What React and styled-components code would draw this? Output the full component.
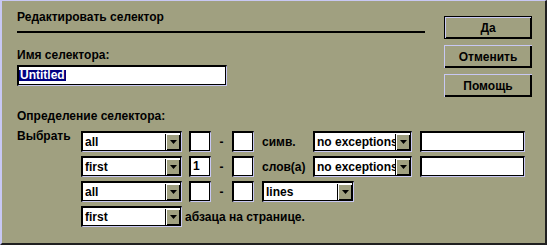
import React from "react";
import styled, { createGlobalStyle, css } from "styled-components";

const KHAKI = "#a0a080";
const LAV = "#c8c8f4";
const DARK = "#202020";

const Global = createGlobalStyle`
  html, body { margin: 0; padding: 0; background: ${KHAKI}; }
  body { font-family: "Liberation Sans", Arial, sans-serif; font-weight: bold; font-size: 12px; color: #000; }
  * { box-sizing: border-box; }
`;

const sunken = css`
  border-style: solid;
  border-width: 2px 1px 1px 2px;
  border-color: #000 ${LAV} ${LAV} #000;
  box-shadow: inset -1px -1px 0 #000;
  background: #fff;
`;

const Window = styled.div`
  width: 547px;
  height: 245px;
  background: ${KHAKI};
  border-style: solid;
  border-width: 1px 2px 2px 2px;
  border-color: ${LAV} ${DARK} ${DARK} ${LAV};
  display: flex;
  flex-direction: column;
`;

const TopRow = styled.div`
  display: flex;
  align-items: flex-start;
  padding-left: 15px;
`;

const MainCol = styled.div`
  width: 408px;
  margin-top: 9px;
  display: flex;
  flex-direction: column;
`;

const Title = styled.div`
  line-height: 14px;
  height: 14px;
  white-space: nowrap;
`;

const Rule = styled.div`
  height: 2px;
  background: #000;
  margin-top: 7px;
`;

const Label = styled.div`
  line-height: 14px;
  height: 14px;
  margin-top: ${(p) => p.$mt || 0}px;
  white-space: nowrap;
`;

const NameInput = styled.div`
  ${sunken};
  width: 210px;
  height: 21px;
  margin-top: 3px;
  padding: 1px 0 0 0;
`;

const Selected = styled.span`
  display: inline-block;
  background: #000080;
  color: #fff;
  line-height: 11px;
  height: 11px;
  padding: 0 1px 0 1px;
`;

const ButtonCol = styled.div`
  margin-left: 19px;
  margin-top: 15px;
  display: flex;
  flex-direction: column;
  gap: 6px;
`;

const Button = styled.div`
  width: 88px;
  height: 23px;
  background: ${KHAKI};
  display: flex;
  align-items: center;
  justify-content: center;
  box-shadow: inset 1px 1px 0 ${LAV}, inset -2px -2px 0 #000;
  ${(p) =>
    p.$default &&
    css`
      border: 1px solid #000;
      box-shadow: inset 1px 1px 0 ${LAV}, inset -1px -1px 0 #000;
    `}
`;

const DefSection = styled.div`
  padding-left: 15px;
  margin-top: 12px;
  display: flex;
  flex-direction: column;
`;

const DefBody = styled.div`
  display: flex;
  margin-top: 8px;
`;

const ChooseLabel = styled.div`
  width: 64px;
  line-height: 11px;
  white-space: nowrap;
`;

const Rows = styled.div`
  display: flex;
  flex-direction: column;
  gap: 4px;
`;

const Row = styled.div`
  display: flex;
  align-items: center;
  height: 21px;
`;

const Select = styled.div`
  ${sunken};
  width: ${(p) => p.$w}px;
  height: 21px;
  margin-left: ${(p) => p.$ml || 0}px;
  display: flex;
  align-items: stretch;
  padding: 0 1px 1px 0;
`;

const SelectText = styled.div`
  flex: 1;
  overflow: hidden;
  white-space: nowrap;
  line-height: 18px;
  padding-left: 2px;
`;

const ArrowBtn = styled.div`
  width: 15px;
  flex: none;
  margin-top: 1px;
  background: ${KHAKI};
  border-left: 1px solid #000;
  box-shadow: inset 1px 1px 0 #fff, inset -1px -1px 0 #000;
  display: flex;
  align-items: center;
  justify-content: center;
`;

const Box = styled.div`
  ${sunken};
  width: ${(p) => p.$w}px;
  height: 21px;
  margin-left: ${(p) => p.$ml || 0}px;
  line-height: 16px;
  padding-left: 2px;
`;

const Dash = styled.div`
  width: 21px;
  text-align: center;
`;

const Unit = styled.div`
  width: 51px;
  margin-left: ${(p) => p.$ml || 0}px;
  white-space: nowrap;
`;

const Tail = styled.div`
  margin-left: 3px;
  white-space: nowrap;
`;

function Arrow() {
  return (
    <ArrowBtn>
      <svg width="7" height="4" viewBox="0 0 7 4">
        <polygon points="0,0 7,0 3.5,4" fill="#000" />
      </svg>
    </ArrowBtn>
  );
}

function Combo({ w, ml, children }) {
  return (
    <Select $w={w} $ml={ml}>
      <SelectText>{children}</SelectText>
      <Arrow />
    </Select>
  );
}

function Range({ from }) {
  return (
    <>
      <Box $w={22} $ml={7}>{from}</Box>
      <Dash>-</Dash>
      <Box $w={22} />
    </>
  );
}

export default function App() {
  return (
    <>
      <Global />
      <Window>
        <TopRow>
          <MainCol>
            <Title>Редактировать селектор</Title>
            <Rule />
            <Label $mt={15}>Имя селектора:</Label>
            <NameInput>
              <Selected>Untitled</Selected>
            </NameInput>
          </MainCol>
          <ButtonCol>
            <Button $default>Да</Button>
            <Button>Отменить</Button>
            <Button>Помощь</Button>
          </ButtonCol>
        </TopRow>
        <DefSection>
          <Label>Определение селектора:</Label>
          <DefBody>
            <ChooseLabel>Выбрать</ChooseLabel>
            <Rows>
              <Row>
                <Combo w={101}>all</Combo>
                <Range />
                <Unit $ml={8}>симв.</Unit>
                <Combo w={99}>no exceptions</Combo>
                <Box $w={105} $ml={8} />
              </Row>
              <Row>
                <Combo w={101}>first</Combo>
                <Range from="1" />
                <Unit $ml={8}>слов(а)</Unit>
                <Combo w={99}>no exceptions</Combo>
                <Box $w={105} $ml={8} />
              </Row>
              <Row>
                <Combo w={101}>all</Combo>
                <Range />
                <Combo w={92} ml={8}>lines</Combo>
              </Row>
              <Row>
                <Combo w={101}>first</Combo>
                <Tail>абзаца на странице.</Tail>
              </Row>
            </Rows>
          </DefBody>
        </DefSection>
      </Window>
    </>
  );
}
